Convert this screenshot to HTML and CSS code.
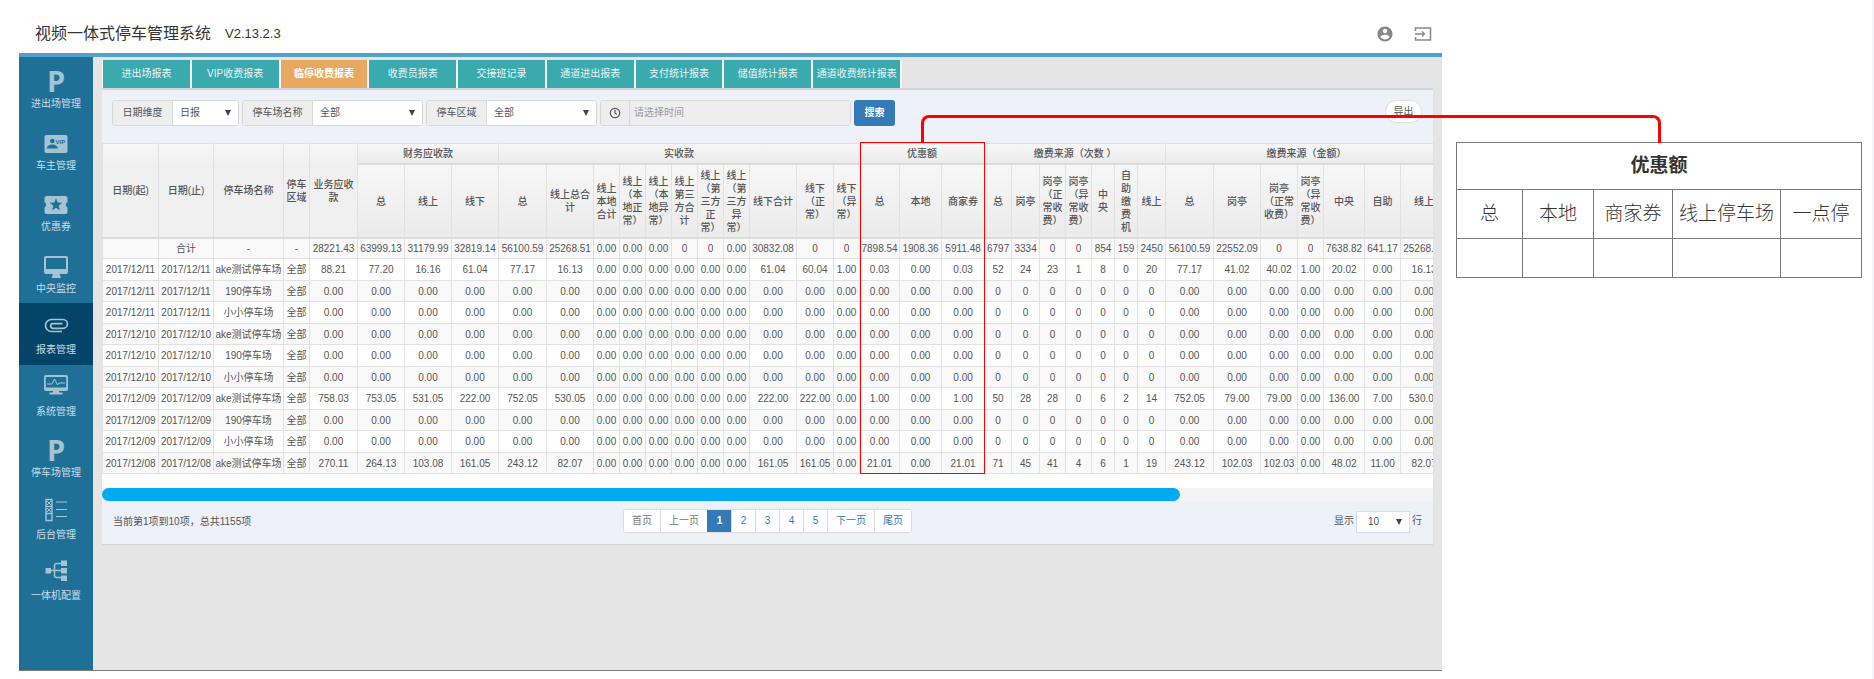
FILE: index.html
```
<!DOCTYPE html>
<html lang="zh-CN">
<head>
<meta charset="utf-8">
<title>视频一体式停车管理系统</title>
<link rel="stylesheet" href="styles.css">
</head>
<body>
<div class="stage">
  <div class="app">
    <header class="topbar">
      <h1 class="brand">视频一体式停车管理系统</h1>
      <span class="version">V2.13.2.3</span>
      <button class="icon-btn push" aria-label="用户">
        <svg width="18" height="18" viewBox="0 0 24 24"><path fill="currentColor" d="M12 2C6.48 2 2 6.48 2 12s4.480 10 10 10 10-4.480 10-10S17.520 2 12 2zm0 3c1.660 0 3 1.340 3 3s-1.340 3-3 3-3-1.340-3-3 1.340-3 3-3zm0 14.200c-2.500 0-4.710-1.280-6-3.220.03-1.990 4-3.080 6-3.080s5.970 1.090 6 3.080c-1.290 1.940-3.500 3.220-6 3.220z"/></svg>
      </button>
      <button class="icon-btn" aria-label="退出">
        <svg width="18" height="16" viewBox="0 0 18 16" fill="none" stroke="currentColor"><path stroke-width="1.500" d="M1.500 5V2h15v12h-15v-3"/><path stroke-width="1.300" d="M1 8h9M8 5.500 10.500 8 8 10.500"/></svg>
      </button>
    </header>
    <div class="body">
      <nav class="sidebar">
        <div class="menu">
          <a class="item" href="#"><span class="pic letter">P</span><span class="label">进出场管理</span></a>
          <a class="item" href="#"><span class="pic"><svg width="26" height="28" viewBox="0 0 26 28"><rect x="1.500" y="6" width="23" height="18" rx="2" fill="currentColor"/><circle class="cut" cx="9.300" cy="12" r="2.300"/><path class="cut" d="M3.500 19.500c1-3 3-4 5.800-4s4.800 1 5.800 4z"/><text class="cut vip" x="12.500" y="14.500">VIP</text></svg></span><span class="label">车主管理</span></a>
          <a class="item" href="#"><span class="pic"><svg width="26" height="28" viewBox="0 0 26 28"><path fill="currentColor" d="M3.500 6h19a2 2 0 0 1 2 2v4.200a2.800 2.800 0 0 0 0 5.200V22a2 2 0 0 1-2 2h-19a2 2 0 0 1-2-2v-4.600a2.800 2.800 0 0 0 0-5.200V8a2 2 0 0 1 2-2z"/><path class="cut" d="m13 8.200 1.700 4.300 4.600.3-3.600 2.900 1.200 4.500-3.900-2.500-3.900 2.500 1.200-4.500-3.600-2.900 4.600-.3z"/></svg></span><span class="label">优惠券</span></a>
          <a class="item" href="#"><span class="pic"><svg width="26" height="28" viewBox="0 0 26 28"><path fill="currentColor" fill-rule="evenodd" d="M3 4h20a2 2 0 0 1 2 2v14a2 2 0 0 1-2 2h-6.500l1.500 4H8.500l1.500-4H3a2 2 0 0 1-2-2V6a2 2 0 0 1 2-2zm0 2v11h20V6z"/></svg></span><span class="label">中央监控</span></a>
          <a class="item active" href="#"><span class="pic"><svg width="26" height="28" viewBox="0 0 26 28" fill="none" stroke="currentColor" stroke-width="1.700"><path d="M19 18.500H8.500a6 6 0 0 1 0-12H20a4.400 4.400 0 0 1 0 8.800H10a2.300 2.300 0 0 1 0-4.600h9.500"/></svg></span><span class="label">报表管理</span></a>
          <a class="item" href="#"><span class="pic"><svg width="26" height="28" viewBox="0 0 26 28"><path fill="currentColor" fill-rule="evenodd" d="M3 0h20a2 2 0 0 1 2 2v12a2 2 0 0 1-2 2H3a2 2 0 0 1-2-2V2a2 2 0 0 1 2-2zm-.2 2v10.500h20.400V2z"/><path fill="currentColor" d="M10 16h6v1.500h3.500v2h-13v-2H10z"/><path fill="none" stroke="currentColor" d="M4 9h5l2.500-5 3 6 1.500-2h6"/></svg></span><span class="label">系统管理</span></a>
          <a class="item" href="#"><span class="pic letter">P</span><span class="label">停车场管理</span></a>
          <a class="item" href="#"><span class="pic"><svg width="26" height="28" viewBox="0 0 26 28" fill="none" stroke="currentColor"><path stroke-width="1.400" d="M3 1.500h6v21H3zM3 8.500h6M3 15.500h6"/><path d="m4 3 4 4m0-4L4 7m0 3 4 4m0-4-4 4"/><path stroke-width="1.200" d="M13 4h11M13 11.500h11M13 18.500h11"/></svg></span><span class="label">后台管理</span></a>
          <a class="item" href="#"><span class="pic"><svg width="26" height="28" viewBox="0 0 26 28"><path fill="none" stroke="currentColor" stroke-width="1.500" d="M5 11.500h16M20 4.500h-6.500a2 2 0 0 0-2 2v10a2 2 0 0 0 2 2H20"/><path fill="currentColor" d="M2.500 9h5.500v5.500H2.500zM18 1.500h6V7h-6zM18 9h6v5.500h-6zM18 16.500h6V22h-6z"/></svg></span><span class="label">一体机配置</span></a>
        </div>
      </nav>
      <main class="content">
        <div class="tabs">
          <button class="tab">进出场报表</button><button class="tab">VIP收费报表</button><button class="tab current">临停收费报表</button><button class="tab">收费员报表</button><button class="tab">交接班记录</button><button class="tab">通道进出报表</button><button class="tab">支付统计报表</button><button class="tab">储值统计报表</button><button class="tab">通道收费统计报表</button>
        </div>
        <section class="panel">
          <form class="filters">
            <div class="group g-dim"><label for="dim">日期维度</label><span class="pick"><select id="dim"><option>日报</option></select></span></div>
            <div class="group g-lot"><label for="lot">停车场名称</label><span class="pick"><select id="lot"><option>全部</option></select></span></div>
            <div class="group g-zone"><label for="zone">停车区域</label><span class="pick"><select id="zone"><option>全部</option></select></span></div>
            <div class="group g-time"><label for="time" aria-label="时间"><svg width="12" height="12" viewBox="0 0 12 12" fill="none" stroke="currentColor" stroke-width="1.200"><circle cx="6" cy="6" r="4.700"/><path d="M6 3v3.200l2 1"/></svg></label><input id="time" type="text" placeholder="请选择时间"></div>
            <button class="search" type="button">搜索</button>
            <button class="export" type="button">导出</button>
          </form>
          <div class="table-wrap">
            <table class="report">
              <colgroup>
                <col class="w57"><col class="w55"><col class="w70"><col class="w26"><col class="w48">
                <col class="w47" span="3">
                <col class="w48"><col class="w47"><col class="w26" span="6"><col class="w47"><col class="w37"><col class="w26">
                <col class="w40"><col class="w42"><col class="w43">
                <col class="w27"><col class="w28"><col class="w26" span="2"><col class="w23" span="2"><col class="w28">
                <col class="w48"><col class="w47"><col class="w37"><col class="w26"><col class="w41"><col class="w36"><col class="w47">
              </colgroup>
              <thead>
                <tr class="groups">
                  <th rowspan="2">日期(起)</th><th rowspan="2">日期(止)</th><th rowspan="2">停车场名称</th><th rowspan="2">停车<br>区域</th><th rowspan="2">业务应收<br>款</th>
                  <th colspan="3">财务应收款</th><th colspan="11">实收款</th><th colspan="3">优惠额</th><th colspan="7">缴费来源（次数 ）</th><th colspan="7">缴费来源（金额）</th>
                </tr>
                <tr class="fields">
                  <th>总</th><th>线上</th><th>线下</th>
                  <th>总</th><th>线上总合<br>计</th><th>线上<br>本地<br>合计</th><th>线上<br>（本<br>地正<br>常）</th><th>线上<br>（本<br>地异<br>常）</th><th>线上<br>第三<br>方合<br>计</th><th>线上<br>（第<br>三方<br>正<br>常）</th><th>线上<br>（第<br>三方<br>异<br>常）</th><th>线下合计</th><th>线下<br>（正<br>常）</th><th>线下<br>（异<br>常）</th>
                  <th>总</th><th>本地</th><th>商家券</th>
                  <th>总</th><th>岗亭</th><th>岗亭<br>（正<br>常收<br>费）</th><th>岗亭<br>（异<br>常收<br>费）</th><th>中<br>央</th><th>自<br>助<br>缴<br>费<br>机</th><th>线上</th>
                  <th>总</th><th>岗亭</th><th>岗亭<br>（正常<br>收费）</th><th>岗亭<br>（异<br>常收<br>费）</th><th>中央</th><th>自助</th><th>线上</th>
                </tr>
              </thead>
              <tbody id="rows"></tbody>
            </table>
          </div>
          <div class="track"><div class="thumb"></div></div>
          <footer class="foot">
            <span class="summary">当前第1项到10项，总共1155项</span>
            <div class="pager">
              <button class="page word off">首页</button><button class="page word off">上一页</button><button class="page on">1</button><button class="page">2</button><button class="page">3</button><button class="page">4</button><button class="page">5</button><button class="page word">下一页</button><button class="page word">尾页</button>
            </div>
            <div class="size"><label for="size">显示</label><span class="pick"><select id="size"><option>10</option></select></span><span>行</span></div>
          </footer>
        </section>
      </main>
    </div>
  </div>
  <aside class="note">
    <table class="detail">
      <colgroup><col class="d1"><col class="d2"><col class="d3"><col class="d4"><col class="d5"></colgroup>
      <thead>
        <tr class="caption"><th colspan="5">优惠额</th></tr>
        <tr class="names"><td>总</td><td>本地</td><td>商家券</td><td>线上停车场</td><td>一点停</td></tr>
      </thead>
      <tbody><tr class="blank"><td></td><td></td><td></td><td></td><td></td></tr></tbody>
    </table>
  </aside>
  <div class="link-line"></div>
  <div class="mark-box"></div>
</div>
<script src="script.js"></script>
</body>
</html>
```
FILE: styles.css
```
* { box-sizing: border-box; }

body {
  margin: 0;
  background: #fff;
  color: #555;
  font: 10px/14px "Liberation Sans", "Noto Sans CJK SC", sans-serif;
}

button, select, input { font: inherit; color: inherit; margin: 0; }
button { padding: 0; border: 0; background: none; cursor: pointer; }

.stage {
  position: relative;
  display: flex;
  gap: 14px;
  min-height: 100vh;
  padding: 0 10px 8px 19px;
  border-right: 2px solid #f5f5f7;
}

.app { flex: 1; min-width: 0; display: flex; flex-direction: column; }

/* top bar */
.topbar {
  display: flex;
  align-items: center;
  height: 57px;
  padding: 14px 10px 0 16px;
  border-bottom: 4px solid #51a2cb;
  color: #333;
}
.brand { margin: 0 14px 0 0; font-size: 16px; line-height: 20px; font-weight: 400; }
.version { font-size: 13px; line-height: 20px; }
.icon-btn { display: flex; color: #888; margin-left: 20px; }
.icon-btn.push { margin-left: auto; }

.body { flex: 1; display: flex; border-bottom: 1px solid #7c7c7c; background: #e5e5e5; }

/* side menu */
.sidebar { width: 74px; background: #1f7097; }
.menu { display: grid; grid-template-rows: repeat(9, 1fr); height: 554px; }
.item {
  display: flex;
  flex-direction: column;
  align-items: center;
  padding-top: 10px;
  color: #a5c3d1;
  text-decoration: none;
}
.item.active { background: #044469; }
.pic { display: flex; justify-content: center; height: 28px; }
.letter { font: 700 29px/28px "Open Sans", sans-serif; }
.label { margin-top: 2px; color: #c9dde6; }
.cut { fill: #1f7097; }
.vip { font: 700 6px "Liberation Sans", sans-serif; }

/* content */
.content { flex: 1; min-width: 0; padding: 3px 9px 0 9px; }
.tabs { display: flex; width: 800px; height: 28px; border-left: 1px solid #fff; }
.tab {
  flex: 1;
  border-right: 2px solid #f4f4f4;
  background: #3aaaae;
  color: #eaf6f6;
  white-space: nowrap;
}
.tab.current { background: #e9a85f; color: #fff; font-weight: 700; }

.panel { border-top: 2px solid #d2d6de; background: #eef1f7; box-shadow: 0 1px 1px #d5d5d5; }

.filters { display: flex; align-items: flex-start; gap: 3px; height: 53px; padding: 10px 11px 0 10px; }
.group {
  display: flex;
  height: 26px;
  border: 1px solid #d8d8d8;
  border-radius: 3px;
  background: #fff;
  overflow: hidden;
}
.group label {
  display: flex;
  align-items: center;
  justify-content: center;
  background: #eee;
  border-right: 1px solid #d8d8d8;
}
.g-dim { width: 127px; }
.g-dim label { width: 60px; }
.g-lot { width: 181px; }
.g-lot label { width: 70px; }
.g-zone { width: 171px; }
.g-zone label { width: 60px; }
.g-time { width: 251px; }
.g-time label { width: 29px; }
.g-time input { flex: 1; min-width: 0; padding: 0 4px; border: 0; background: #eee; }
.g-time input::placeholder { color: #999; opacity: 1; }

.pick { position: relative; flex: 1; display: flex; }
.pick select { flex: 1; min-width: 0; padding: 0 7px; border: 0; background: #fff; appearance: none; }
.pick::after {
  content: "";
  position: absolute;
  right: 7px;
  top: 9px;
  width: 6px;
  height: 6px;
  background: #444;
  clip-path: polygon(0 0, 100% 0, 50% 100%);
  pointer-events: none;
}

.search { width: 41px; height: 26px; border-radius: 3px; background: #337ab7; color: #fff; font-weight: 700; }
.export {
  width: 37px;
  height: 23px;
  margin-left: auto;
  border: 1px solid #ddd;
  border-radius: 12px;
  background: #fff;
}

/* report table */
.table-wrap { overflow: hidden; background: #fff; padding-bottom: 14px; }
.report { width: 1346px; table-layout: fixed; border-collapse: separate; border-spacing: 0; color: #555; }
.report th, .report td {
  padding: 0;
  border-right: 1px solid #e2e2e2;
  border-bottom: 1px solid #e2e2e2;
  text-align: center;
  white-space: nowrap;
  line-height: 13px;
}
.report th { font-weight: 500; background: linear-gradient(#f7f7f7, #ebebeb); border-bottom: 2px solid #dcdcdc; }
.report th[rowspan] { background: linear-gradient(#f7f7f7, #f0f0f0 22%); }
.report td:first-child, .groups th:first-child { border-left: 1px solid #e2e2e2; }
.groups th { height: 22px; border-top: 1px solid #e0e0e0; }
.fields th { height: 74px; }
.report td { height: 22px; }
.report tr:nth-child(odd) td { height: 21px; background: #f9f9f9; }
.report tr.sum td { height: 20px; }
.w23 { width: 23px; } .w26 { width: 26px; } .w27 { width: 27px; } .w28 { width: 28px; }
.w36 { width: 36px; } .w37 { width: 37px; } .w40 { width: 40px; } .w41 { width: 41px; }
.w42 { width: 42px; } .w43 { width: 43px; } .w47 { width: 47px; } .w48 { width: 48px; }
.w55 { width: 55px; } .w57 { width: 57px; } .w70 { width: 70px; }

.track { height: 14px; background: #f4f4f4; }
.thumb { width: 81%; height: 13px; border-radius: 7px; background: #00aaf0; }

/* footer */
.foot {
  display: grid;
  grid-template-columns: 1fr auto 1fr;
  align-items: start;
  height: 42px;
  padding: 7px 11px 0;
}
.summary { padding-top: 6px; }
.pager { display: flex; border: 1px solid #ddd; border-radius: 3px; overflow: hidden; }
.page { width: 24px; height: 22px; background: #fff; color: #337ab7; border-left: 1px solid #ddd; }
.page:first-child { border-left: 0; }
.page.word { width: auto; padding: 0 8px; }
.page.off { color: #777; }
.page.on { background: #337ab7; border-color: #337ab7; color: #fff; font-weight: 700; }
.size { display: flex; justify-content: flex-end; align-items: center; gap: 2px; }
.size .pick { flex: none; width: 54px; height: 22px; margin-top: 2px; border: 1px solid #d6dde8; }
.size .pick select { padding: 0 11px; }
.size .pick::after { top: 7px; }

/* side note */
.note { width: 406px; padding-top: 142px; }
.detail { width: 100%; table-layout: fixed; border-collapse: collapse; color: #333; font-size: 19px; line-height: 24px; }
.detail th, .detail td { padding: 0; border: 1px solid #797979; text-align: center; white-space: nowrap; }
.detail th { font-weight: 700; }
.detail td { font-weight: 300; }
.caption { height: 47px; }
.names { height: 49px; }
.blank { height: 39px; }
.d1 { width: 66px; } .d2 { width: 71px; } .d3 { width: 79px; } .d4 { width: 108px; } .d5 { width: 81px; }

/* annotation drawn over the page */
.link-line {
  position: absolute;
  left: 921px;
  right: 211px;
  top: 115px;
  height: 28px;
  border: 3px solid #f00;
  border-bottom: 0;
  border-radius: 8px 8px 0 0;
  pointer-events: none;
}
.mark-box {
  position: absolute;
  left: 860px;
  top: 142px;
  width: 125px;
  height: 332px;
  border: 1px solid #f00;
  pointer-events: none;
}
```
FILE: script.js
```
const empty = "0.00 ".repeat(18) + "0 ".repeat(7) + "0.00 ".repeat(7);
const lots = ["ake测试停车场", "190停车场", "小小停车场"];
const values = {
  0: "88.21 77.20 16.16 61.04 77.17 16.13 0.00 0.00 0.00 0.00 0.00 0.00 61.04 60.04 1.00 0.03 0.00 0.03 52 24 23 1 8 0 20 77.17 41.02 40.02 1.00 20.02 0.00 16.13",
  6: "758.03 753.05 531.05 222.00 752.05 530.05 0.00 0.00 0.00 0.00 0.00 0.00 222.00 222.00 0.00 1.00 0.00 1.00 50 28 28 0 6 2 14 752.05 79.00 79.00 0.00 136.00 7.00 530.05",
  9: "270.11 264.13 103.08 161.05 243.12 82.07 0.00 0.00 0.00 0.00 0.00 0.00 161.05 161.05 0.00 21.01 0.00 21.01 71 45 41 4 6 1 19 243.12 102.03 102.03 0.00 48.02 11.00 82.07"
};
const days = ["2017/12/11", "2017/12/10", "2017/12/09", "2017/12/08"];
const body = document.getElementById("rows");

function addRow(head, text, name) {
  const row = body.insertRow();
  if (name) row.className = name;
  head.concat(text.trim().split(" ")).forEach(value => { row.insertCell().textContent = value; });
}

addRow(["", "合计", "-", "-"], "28221.43 63999.13 31179.99 32819.14 56100.59 25268.51 0.00 0.00 0.00 0 0 0.00 30832.08 0 0 7898.54 1908.36 5911.48 6797 3334 0 0 854 159 2450 56100.59 22552.09 0 0 7638.82 641.17 25268.51", "sum");
for (let i = 0; i < 10; i++) {
  const day = days[Math.floor(i / 3)];
  addRow([day, day, lots[i % 3], "全部"], values[i] || empty);
}
```
